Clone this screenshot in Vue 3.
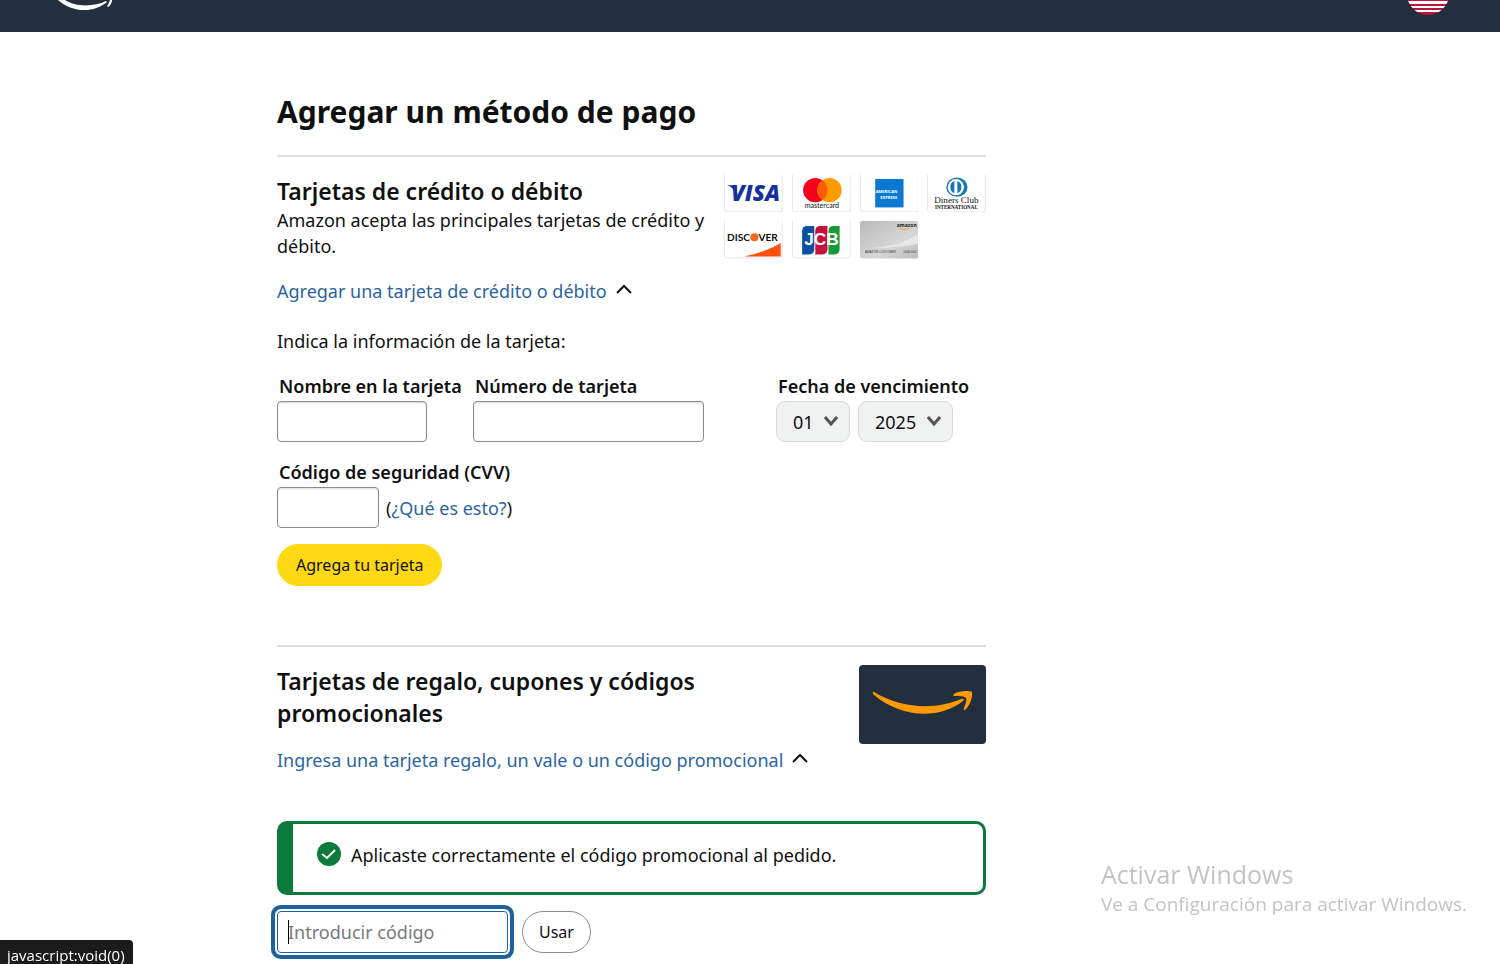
<script setup>
import { ref } from 'vue'

const cardOpen = ref(true)
const giftOpen = ref(true)

const name = ref('')
const number = ref('')
const cvv = ref('')
const promo = ref('')

const month = ref('01')
const year = ref('2025')
const months = ['01', '02', '03', '04', '05', '06', '07', '08', '09', '10', '11', '12']
const years = ['2025', '2026', '2027', '2028', '2029', '2030']
</script>

<template>
  <div class="page">
    <header class="topbar">
      <svg class="logo" viewBox="0 0 60 14" aria-hidden="true">
        <path d="M1 0C14 12 36 14 50 2L49 1C37 7 18 7 8 0Z" fill="#fff" />
        <path d="M55 0C55 3 53 6 51 7L50 6C52 4 52 2 53 0Z" fill="#fff" />
      </svg>
      <svg class="flag" viewBox="0 0 42 16" aria-hidden="true">
        <clipPath id="flag-clip"><circle cx="21" cy="-6" r="21" /></clipPath>
        <g clip-path="url(#flag-clip)">
          <rect width="42" height="16" fill="#b8163a" />
          <path d="M0 1H42V4H0ZM0 6H42V8H0ZM0 10H42V12H0Z" fill="#fff" />
        </g>
      </svg>
    </header>

    <main class="content">
      <h1>Agregar un método de pago</h1>

      <section class="block cards-block">
        <div class="block-head">
          <div class="intro">
            <h2>Tarjetas de crédito o débito</h2>
            <p>Amazon acepta las principales tarjetas de crédito y débito.</p>
          </div>
          <div class="brands">
            <svg viewBox="0 0 58 37" role="img" aria-label="Visa">
              <rect class="card" x="0.5" y="-3" width="57" height="39.5" rx="3" />
              <text x="7" y="26" class="visa">VISA</text>
              <path d="M3 10H11L14 22L9 14Q7 11 3 10Z" fill="#17329b" />
            </svg>
            <svg viewBox="0 0 58 37" role="img" aria-label="Mastercard">
              <rect class="card" x="0.5" y="-3" width="57" height="39.5" rx="3" />
              <circle cx="23" cy="15" r="12" fill="#f7001d" />
              <circle cx="37" cy="15" r="12" fill="#ff9a00" />
              <path d="M30 5.2A12 12 0 0 1 30 24.8A12 12 0 0 1 30 5.2Z" fill="#ff5b00" />
              <text x="29.5" y="33" class="mc">mastercard</text>
            </svg>
            <svg viewBox="0 0 58 37" role="img" aria-label="American Express">
              <rect class="card" x="0.5" y="-3" width="57" height="39.5" rx="3" />
              <rect x="15" y="4" width="28" height="28" fill="#0878d2" />
              <text x="15.5" y="18" class="amex">AMERICAN</text>
              <text x="20" y="24" class="amex">EXPRESS</text>
            </svg>
            <svg viewBox="0 0 58 37" role="img" aria-label="Diners Club International">
              <rect class="card" x="0.5" y="-3" width="57" height="39.5" rx="3" />
              <ellipse cx="29.5" cy="12" rx="10.5" ry="9.5" fill="#1579b9" />
              <circle cx="28.5" cy="12" r="8" fill="#fff" />
              <path d="M27 6A6.5 6.5 0 0 0 27 18ZM30 6A6.5 6.5 0 0 1 30 18Z" fill="#1579b9" />
              <text x="29" y="28" class="diners">Diners Club</text>
              <text x="29" y="34" class="diners-sub">INTERNATIONAL</text>
            </svg>
            <svg viewBox="0 0 58 37" role="img" aria-label="Discover">
              <rect class="card" x="0.5" y="-3" width="57" height="39.5" rx="3" />
              <text x="3" y="20" class="discover">DISC</text>
              <text x="34" y="20" class="discover">VER</text>
              <circle cx="30" cy="16" r="4" fill="#f4661b" />
              <path d="M20 35Q40 31 56 22V35Z" fill="#ff4d0a" />
            </svg>
            <svg viewBox="0 0 58 37" role="img" aria-label="JCB">
              <rect class="card" x="0.5" y="-3" width="57" height="39.5" rx="3" />
              <path d="M15 5H22V28Q22 33 17 33H10V10Q10 5 15 5Z" fill="#0b4fa0" />
              <path d="M28 5H35V28Q35 33 30 33H23V10Q23 5 28 5Z" fill="#c4103f" />
              <path d="M41 5H47V28Q47 33 42 33H36V10Q36 5 41 5Z" fill="#169b38" />
              <text x="29" y="24" class="jcb">JCB</text>
            </svg>
            <svg viewBox="0 0 58 37" role="img" aria-label="Amazon">
              <defs>
                <linearGradient id="silver" x1="0" y1="0" x2="1" y2="1">
                  <stop offset="0" stop-color="#b9b9b9" />
                  <stop offset="0.6" stop-color="#d6d6d6" />
                  <stop offset="1" stop-color="#bcbcbc" />
                </linearGradient>
              </defs>
              <rect width="58" height="37" rx="2" fill="url(#silver)" />
              <path d="M0 27Q38 27 58 12V22Q40 27 0 27Z" fill="#e6e6e6" />
              <text x="56" y="6" class="amzn">amazon</text>
              <path d="M39 7Q44 10 49 7" stroke="#f3a847" fill="none" />
              <text x="5" y="32" class="amzn-sub">AMAZON CUSTOMER</text>
              <text x="43" y="32" class="amzn-sub">0000 000</text>
            </svg>
          </div>
        </div>

        <a href="#" class="toggle" @click.prevent="cardOpen = !cardOpen">
          Agregar una tarjeta de crédito o débito
          <svg class="caret-up" viewBox="0 0 18 10"><path d="M2 9L9 2L16 9" /></svg>
        </a>

        <form v-if="cardOpen" class="card-form" @submit.prevent>
          <p>Indica la información de la tarjeta:</p>
          <div class="fields">
            <div class="field field-name">
              <label for="name">Nombre en la tarjeta</label>
              <input id="name" v-model="name" type="text" />
            </div>
            <div class="field field-number">
              <label for="number">Número de tarjeta</label>
              <input id="number" v-model="number" type="text" />
            </div>
            <div class="field">
              <label for="month">Fecha de vencimiento</label>
              <div class="expiry">
                <div class="select month">
                  <select id="month" v-model="month">
                    <option v-for="m in months" :key="m">{{ m }}</option>
                  </select>
                  <svg viewBox="0 0 14 10"><path d="M1 1L7 8L13 1" /></svg>
                </div>
                <div class="select year">
                  <select v-model="year" aria-label="Año">
                    <option v-for="y in years" :key="y">{{ y }}</option>
                  </select>
                  <svg viewBox="0 0 14 10"><path d="M1 1L7 8L13 1" /></svg>
                </div>
              </div>
            </div>
          </div>
          <div class="field field-cvv">
            <label for="cvv">Código de seguridad (CVV)</label>
            <div class="cvv-row">
              <input id="cvv" v-model="cvv" type="text" />
              <span>(<a href="#" @click.prevent>¿Qué es esto?</a>)</span>
            </div>
          </div>
          <button type="submit" class="btn primary">Agrega tu tarjeta</button>
        </form>
      </section>

      <section class="block gift-block">
        <div class="block-head">
          <h2>Tarjetas de regalo, cupones y códigos promocionales</h2>
          <svg class="gift" viewBox="0 0 127 79" role="img" aria-label="Amazon">
            <rect width="127" height="79" rx="4" fill="#232f3e" />
            <path d="M15 27C43 44 77 45 102 34Q106 33 104 36C80 55 41 53 14 29Q13 26 15 27Z" fill="#ff9900" />
            <path d="M95 29C99 26 110 25 113 27C114 33 110 42 106 45Q104 46 105 43C107 38 108 34 107 33C105 31 101 31 96 31Q93 31 95 29Z" fill="#ff9900" />
          </svg>
        </div>
        <a href="#" class="toggle" @click.prevent="giftOpen = !giftOpen">
          Ingresa una tarjeta regalo, un vale o un código promocional
          <svg class="caret-up" viewBox="0 0 18 10"><path d="M2 9L9 2L16 9" /></svg>
        </a>

        <template v-if="giftOpen">
          <div class="alert" role="status">
            <svg viewBox="0 0 24 24" aria-hidden="true">
              <circle cx="12" cy="12" r="12" fill="#0b7b3c" />
              <path d="M5 12L10 16L18 8" fill="none" stroke="#fff" stroke-width="2" />
            </svg>
            <span>Aplicaste correctamente el código promocional al pedido.</span>
          </div>
          <form class="promo" @submit.prevent>
            <div class="promo-input">
              <input v-model="promo" type="text" placeholder="Introducir código" aria-label="Introducir código" />
              <i class="text-cursor"></i>
            </div>
            <button type="submit" class="btn">Usar</button>
          </form>
        </template>
      </section>
    </main>

    <aside class="watermark">
      <strong>Activar Windows</strong>
      <span>Ve a Configuración para activar Windows.</span>
    </aside>
    <div class="link-status">javascript:void(0)</div>
  </div>
</template>

<style>
body {
  margin: 0;
  background: #fff;
}
</style>

<style scoped>
.page {
  font-family: "Noto Sans", "Open Sans", sans-serif;
  font-size: 18px;
  line-height: 26px;
  color: #0f1111;
}

* {
  box-sizing: border-box;
}

h1,
h2,
p {
  margin: 0;
}

a {
  color: #2b659f;
  text-decoration: none;
}

.topbar {
  display: flex;
  justify-content: space-between;
  height: 32px;
  padding: 0 51px 0 57px;
  background: #232f3e;
}

.logo {
  width: 60px;
  height: 14px;
}

.flag {
  width: 42px;
  height: 16px;
}

.content {
  max-width: 709px;
  margin-left: 277px;
  padding: 60px 0 11px;
}

h1 {
  font-size: 30px;
  line-height: 40px;
  padding-bottom: 23px;
}

h2 {
  font-size: 23px;
  font-weight: 600;
  line-height: 32px;
}

.block {
  border-top: 2px solid #dedede;
  padding-top: 18px;
}

.block-head {
  display: flex;
  justify-content: space-between;
}

.intro {
  width: 432px;
}

.brands {
  display: grid;
  grid-template-columns: repeat(4, 1fr);
  gap: 9px;
  width: 262px;
  align-content: start;
}

.brands svg {
  display: block;
  width: 100%;
}

.card {
  fill: #fff;
  stroke: #e8e8e8;
}

.visa {
  font: italic 800 22px "Open Sans", sans-serif;
  fill: #17329b;
}

.mc {
  font: 7px "Lato", sans-serif;
  text-anchor: middle;
  fill: #111;
}

.amex {
  font: bold 4px "Open Sans", sans-serif;
  fill: #fff;
}

.diners {
  font: 9px "Liberation Serif", serif;
  text-anchor: middle;
  fill: #111;
}

.diners-sub {
  font: bold 5px "Liberation Serif", serif;
  text-anchor: middle;
  fill: #111;
}

.discover {
  font: bold 10px "Lato", sans-serif;
  fill: #111;
}

.jcb {
  font: bold 17px "Liberation Sans", sans-serif;
  text-anchor: middle;
  fill: #fff;
}

.amzn {
  font: bold 5px "Open Sans", sans-serif;
  text-anchor: end;
  fill: #222;
}

.amzn-sub {
  font: 3px "Liberation Sans", sans-serif;
  fill: #333;
}

.toggle {
  display: flex;
  align-items: center;
  gap: 8px;
  margin-top: 19px;
}

.caret-up {
  width: 18px;
  height: 10px;
  margin-bottom: 4px;
  fill: none;
  stroke: #0f1111;
  stroke-width: 2;
}

.card-form {
  padding: 24px 0 59px;
}

.fields {
  display: flex;
  margin-top: 19px;
}

.field label {
  display: block;
  padding-left: 2px;
  margin-bottom: 2px;
  font-weight: 600;
  white-space: nowrap;
}

.field-name {
  width: 196px;
}

.field-number {
  width: 303px;
}

.field-cvv {
  margin-top: 17px;
}

input {
  display: block;
  height: 41px;
  padding: 0 10px;
  font: inherit;
  color: inherit;
  background: #fff;
  border: 1px solid #888c8c;
  border-radius: 4px;
  box-shadow: inset 0 1px 2px rgba(15, 17, 17, 0.15);
  outline: 0;
}

.field-name input {
  width: 150px;
}

.field-number input {
  width: 231px;
}

.field-cvv input {
  width: 102px;
}

.cvv-row {
  display: flex;
  align-items: center;
  gap: 7px;
}

.expiry {
  display: flex;
  gap: 8px;
}

.select {
  position: relative;
}

.select select {
  width: 100%;
  height: 41px;
  padding: 0 16px;
  font: inherit;
  color: inherit;
  appearance: none;
  background: #f0f2f2;
  border: 1px solid #d5d9d9;
  border-radius: 9px;
}

.select svg {
  position: absolute;
  top: 15px;
  right: 12px;
  width: 14px;
  height: 10px;
  fill: none;
  stroke: #555;
  stroke-width: 3;
  pointer-events: none;
}

.month {
  width: 74px;
}

.year {
  width: 95px;
}

.btn {
  height: 42px;
  padding: 0 16px;
  font: inherit;
  font-size: 16px;
  color: #0f1111;
  background: #fff;
  border: 1px solid #888c8c;
  border-radius: 21px;
  cursor: pointer;
}

.btn.primary {
  display: block;
  margin-top: 16px;
  padding: 0 18px;
  background: #ffd814;
  border-color: #ffd814;
}

.gift-block h2 {
  width: 440px;
}

.gift {
  width: 127px;
  height: 79px;
}

.gift-block .toggle {
  margin-top: 3px;
}

.alert {
  display: flex;
  gap: 10px;
  height: 74px;
  margin-top: 48px;
  padding: 18px 24px;
  border: 3px solid #0b7b3c;
  border-left-width: 16px;
  border-radius: 10px;
}

.alert svg {
  width: 24px;
  height: 24px;
}

.promo {
  display: flex;
  gap: 14px;
  margin-top: 16px;
}

.promo-input {
  position: relative;
}

.promo-input input {
  width: 231px;
  height: 42px;
  border-color: #1f609f;
  box-shadow: 0 0 0 2px #fff, 0 0 0 6px #1f609f;
}

.promo-input input::placeholder {
  color: #757b7b;
  opacity: 1;
}

.text-cursor {
  position: absolute;
  top: 9px;
  left: 11px;
  width: 1px;
  height: 24px;
  background: #000;
}

.watermark {
  position: fixed;
  right: 33px;
  bottom: 47px;
  display: flex;
  flex-direction: column;
  color: #c3c3c3;
  font-family: "Open Sans", sans-serif;
}

.watermark strong {
  font-size: 25px;
  font-weight: normal;
  line-height: 34px;
}

.watermark span {
  font-size: 19px;
}

.link-status {
  position: fixed;
  left: 0;
  bottom: 0;
  height: 24px;
  padding: 2px 8px 0 7px;
  font-family: "Open Sans", sans-serif;
  font-size: 15px;
  color: #fff;
  background: #1b1b1b;
  border-top-right-radius: 4px;
}
</style>
